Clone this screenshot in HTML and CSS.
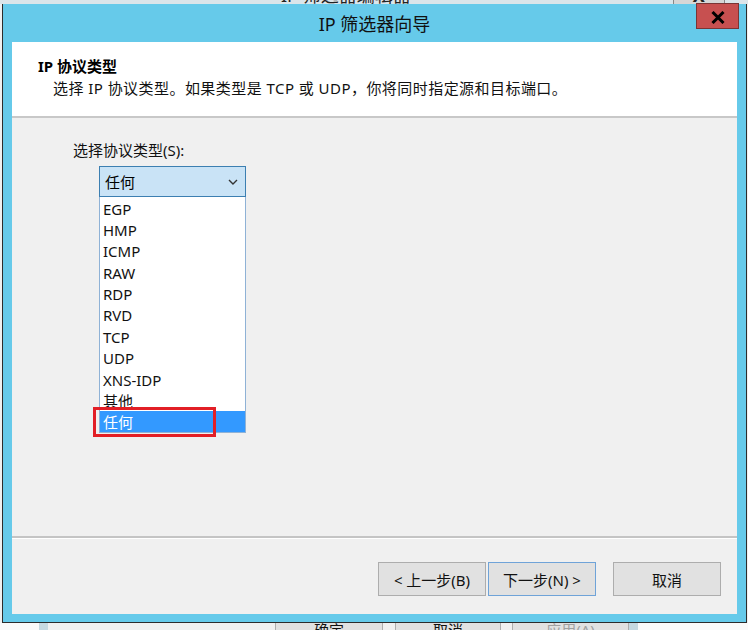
FILE: index.html
```html
<!DOCTYPE html>
<html lang="zh-CN">
<head>
<meta charset="utf-8">
<title>IP 筛选器向导</title>
<link rel="stylesheet" href="styles.css">
</head>
<body>
<div class="bg-top">
  <span class="bg-title">IP 筛选器编辑器</span>
  <span class="bg-close">X</span>
</div>
<div class="dialog">
  <div class="titlebar">
    <span class="title">IP 筛选器向导</span>
    <div class="close">
      <svg width="14" height="13" viewBox="0 0 14 13"><path d="M1.5 1 L12.5 12 M12.5 1 L1.5 12" stroke="#000" stroke-width="3" fill="none"/></svg>
    </div>
  </div>
  <div class="content">
    <div class="header">
      <div class="h-title">IP 协议类型</div>
      <div class="h-sub">选择 IP 协议类型。如果类型是 TCP 或 UDP，你将同时指定源和目标端口。</div>
    </div>
    <div class="body">
      <div class="label">选择协议类型(S):</div>
      <div class="combo-wrap">
        <div class="combo">
          <span>任何</span>
          <svg width="10" height="6" viewBox="0 0 10 6"><path d="M1 1 L5 5 L9 1" stroke="#333" stroke-width="1.4" fill="none"/></svg>
        </div>
        <ul class="list">
          <li>EGP</li>
          <li>HMP</li>
          <li>ICMP</li>
          <li>RAW</li>
          <li>RDP</li>
          <li>RVD</li>
          <li>TCP</li>
          <li>UDP</li>
          <li>XNS-IDP</li>
          <li>其他</li>
          <li class="sel">任何</li>
        </ul>
        <div class="highlight"></div>
      </div>
    </div>
    <div class="footer">
      <div class="btn">&lt; 上一步(B)</div>
      <div class="btn primary">下一步(N) &gt;</div>
      <div class="btn cancel">取消</div>
    </div>
  </div>
</div>
<div class="bg-bottom">
  <div class="bw1"></div>
  <div class="bw2"></div>
  <div class="bw3"></div>
  <div class="bbtn b1">确定</div>
  <div class="bbtn b2">取消</div>
  <div class="bbtn b3">应用(A)</div>
  <div class="bw2"></div>
  <div class="bw4"></div>
</div>
</body>
</html>
```
FILE: styles.css
```css
html, body {
  margin: 0;
  padding: 0;
}
body {
  width: 748px;
  height: 630px;
  overflow: hidden;
  background: #f0f0f0;
  font-family: "Segoe UI", "Noto Sans", "Noto Sans CJK SC", sans-serif;
  color: #000;
}

/* background window peeking at top */
.bg-top {
  height: 4px;
  overflow: hidden;
  background: #dbe5ea;
  display: flex;
  font-size: 18px;
  line-height: 20px;
  color: #222;
}
.bg-title {
  margin-top: -15px;
  margin-left: 281px;
}
.bg-close {
  margin-top: -15px;
  margin-left: 262px;
  width: 50px;
  text-align: center;
  font-weight: bold;
  border-left: 1px solid #888;
  border-right: 1px solid #888;
  background: #d6d6d6;
}

/* dialog */
.dialog {
  margin-left: 2px;
  width: 745px;
  box-sizing: border-box;
  border: 1px solid #2c2c2c;
  border-top: 0;
  background: #66caea;
  padding: 0 9px 8px 9px;
  position: relative;
}
.titlebar {
  height: 38px;
  display: flex;
  align-items: center;
  justify-content: center;
  font-size: 18px;
  font-family: "Noto Sans", "Noto Sans CJK SC", sans-serif;
  color: #111;
}
.close {
  position: absolute;
  top: -1px;
  right: 7px;
  width: 43px;
  height: 26px;
  box-sizing: border-box;
  background: #c75050;
  border: 1px solid #7a3535;
  display: flex;
  align-items: center;
  justify-content: center;
  padding-top: 2px;
}

.content {
  height: 572px;
  display: flex;
  flex-direction: column;
  background: #f0f0f0;
}
.header {
  height: 76px;
  box-sizing: border-box;
  background: #fff;
  border-bottom: 2px solid #c8c8c8;
  padding: 14px 0 0 26px;
  font-size: 15px;
  line-height: 20px;
}
.h-title {
  font-weight: bold;
}
.h-sub {
  margin-top: 2px;
  padding-left: 15px;
  color: #111;
  letter-spacing: 0.45px;
}

.body {
  flex: 1;
  padding: 22px 0 0 61px;
  font-size: 15px;
}
.label {
  line-height: 20px;
  color: #111;
}
.combo-wrap {
  position: relative;
  width: 147px;
  margin: 6px 0 0 26px;
}
.combo {
  height: 31px;
  box-sizing: border-box;
  border: 1px solid #3c7fb1;
  background: #c9e3f6;
  display: flex;
  align-items: center;
  justify-content: space-between;
  padding: 0 7px 0 5px;
}
.list {
  list-style: none;
  margin: 0;
  padding: 0;
  background: #fff;
  border: 1px solid #8fb2d6;
  border-top: 0;
}
.list li {
  height: 19.9px;
  padding-top: 1.5px;
  line-height: 21.4px;
  padding-left: 3px;
  color: #111;
}
.list li.sel {
  background: #3399ff;
  color: #fff;
}
.highlight {
  position: absolute;
  left: -6px;
  top: 241px;
  width: 123px;
  height: 30px;
  box-sizing: border-box;
  border: 3px solid #e21f26;
}

.footer {
  height: 78px;
  box-sizing: border-box;
  border-top: 2px solid #c4c4c4;
  box-shadow: inset 0 1px #fff;
  padding: 24px 16px 0 0;
  display: flex;
  justify-content: flex-end;
  align-items: flex-start;
}
.btn {
  width: 108px;
  height: 34px;
  box-sizing: border-box;
  background: #e1e1e1;
  border: 1px solid #adadad;
  display: flex;
  align-items: center;
  justify-content: center;
  font-size: 15px;
  color: #111;
}
.btn.primary {
  margin-left: 2px;
  border-color: #6fa3d8;
}
.btn.cancel {
  margin-left: 17px;
}

/* background window peeking at bottom */
.bg-bottom {
  height: 7px;
  overflow: hidden;
  display: flex;
  background: #f0f0f0;
}
.bw1 { width: 39px; background: #fafafa; }
.bw2 { width: 9px; background: #c6d9e1; }
.bw3 { width: 227px; }
.bw4 { flex: 1; background: #fafafa; }
.bbtn {
  margin-top: -4px;
  height: 30px;
  box-sizing: border-box;
  background: #e1e1e1;
  border: 1px solid #adadad;
  font-size: 15px;
  line-height: 20px;
  text-align: center;
  color: #111;
}
.b1 { width: 108px; }
.b2 { width: 106px; margin-left: 12px; }
.b3 { width: 117px; margin-left: 11px; color: #a0a0a0; }
```
